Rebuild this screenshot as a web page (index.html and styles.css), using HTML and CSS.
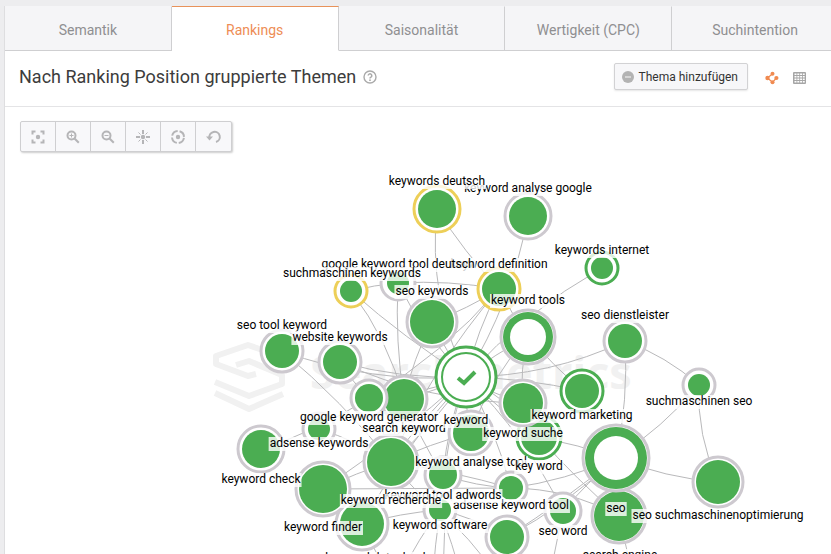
FILE: index.html
```
<!DOCTYPE html>
<html lang="de">
<head>
<meta charset="UTF-8">
<meta name="viewport" content="width=device-width, initial-scale=1.0">
<title>Nach Ranking Position gruppierte Themen</title>
<link rel="stylesheet" href="styles.css">
</head>
<body>

<div class="panel">
<nav class="tabs">
<a href="#semantik">Semantik</a>
<a href="#rankings" class="active">Rankings</a>
<a href="#saisonalitaet">Saisonalität</a>
<a href="#cpc">Wertigkeit (CPC)</a>
<a href="#suchintention">Suchintention</a>
</nav>

<header class="panel-header">
<h1>Nach Ranking Position gruppierte Themen</h1>
<button class="icon-btn help-btn" aria-label="Hilfe">
<svg width="14" height="14" viewBox="0 0 14 14"><circle cx="7" cy="7" r="6" fill="none" stroke="#aaa" stroke-width="1.4"/><path d="M5.2 5.6a1.8 1.8 0 1 1 2.7 1.6c-.6.3-.9.6-.9 1.2" fill="none" stroke="#aaa" stroke-width="1.5"/><circle cx="7" cy="10.2" r=".9" fill="#aaa"/></svg>
</button>
<button class="add-btn">
<svg width="12" height="12" viewBox="0 0 12 12"><circle cx="6" cy="6" r="6" fill="#b3b3b3"/><path d="M3 6h6" stroke="#eee" stroke-width="1.2"/></svg>
Thema hinzufügen
</button>
<button class="icon-btn graph-btn" aria-label="Netzwerk">
<svg width="14" height="14" viewBox="0 0 14 14"><path d="M7.500 2.700L2.500 7l5 4.300M7.500 11.300l3.900-4.300" fill="none" stroke="#f08a50" stroke-width="1.2"/><g fill="#f08a50"><circle cx="2.5" cy="7" r="2.2"/><circle cx="7.5" cy="2.7" r="2"/><circle cx="11.4" cy="7" r="2.1"/><circle cx="7.5" cy="11.3" r="2"/></g></svg>
</button>
<button class="icon-btn" aria-label="Tabelle">
<svg width="13" height="12" viewBox="0 0 13 12"><rect width="13" height="12" rx="1" fill="#a6a6a6"/><g fill="#fff"><path d="M1.500 1.500h2v1.500h-2zM4.300 1.500h2v1.500h-2zM7.100 1.500h2v1.500h-2zM9.900 1.500h1.800v1.500h-1.800z"/><path d="M1.500 4h2v1.500h-2zM4.300 4h2v1.500h-2zM7.100 4h2v1.500h-2zM9.900 4h1.800v1.500h-1.800z"/><path d="M1.500 6.500h2v1.500h-2zM4.300 6.500h2v1.500h-2zM7.100 6.500h2v1.500h-2zM9.900 6.500h1.800v1.500h-1.800z"/><path d="M1.500 9h2v1.500h-2zM4.300 9h2v1.500h-2zM7.100 9h2v1.500h-2zM9.900 9h1.800v1.500h-1.800z"/></g></svg>
</button>
</header>

<main class="graph">
<svg id="graph" class="graph-canvas"></svg>
<div class="toolbar">
<button aria-label="Einpassen"><svg width="14" height="14" viewBox="0 0 14 14"><path d="M1.500 4.500v-3h3M9.500 1.500h3v3M12.500 9.500v3h-3M4.500 12.500h-3v-3"/><circle cx="7" cy="7" r="2.200" class="dot"/></svg></button>
<button aria-label="Vergrößern"><svg width="14" height="14" viewBox="0 0 14 14"><circle cx="5.500" cy="5.500" r="4"/><path d="M8.500 8.500l4.300 4.300"/><path d="M3.500 5.500h4M5.500 3.500v4" class="thin"/></svg></button>
<button aria-label="Verkleinern"><svg width="14" height="14" viewBox="0 0 14 14"><circle cx="5.500" cy="5.500" r="4"/><path d="M8.500 8.500l4.300 4.300"/><path d="M3.500 5.500h4" class="thin"/></svg></button>
<button aria-label="Zentrieren"><svg width="16" height="16" viewBox="0 0 16 16"><path d="M8 1v4M8 11v4M1 8h4M11 8h4"/><path d="M3.500 3.500l2 2M12.500 3.500l-2 2M3.500 12.500l2-2M12.500 12.500l-2-2" class="thin"/><circle cx="8" cy="8" r="2.200" class="dot"/></svg></button>
<button aria-label="Fokus"><svg width="14" height="14" viewBox="0 0 14 14"><circle cx="7" cy="7" r="6" stroke-dasharray="7.400 2" stroke-dashoffset="-1"/><circle cx="7" cy="7" r="2.200" class="dot"/></svg></button>
<button aria-label="Zurücksetzen"><svg width="16" height="14" viewBox="0 0 16 14"><path d="M3.500 8a5.200 5.200 0 1 1 6.500 4"/><path d="M0 6.500h7l-3.500 4z" class="dot"/></svg></button>
</div>
</main>
</div>

<script src="graph.js"></script>
</body>
</html>
```

FILE: styles.css
```
* {
box-sizing: border-box;
}

body {
font-family: Roboto, Arial, sans-serif;
margin: 0;
padding: 6px 0 0 4px;
background-color: #ededef;
overflow: hidden;
}

.panel {
display: flex;
flex-direction: column;
height: calc(100vh - 6px);
margin-right: -8px;
border-left: 1px solid #dedee0;
background-color: white;
}

.tabs {
display: flex;
}

.tabs a {
flex: 1 1 0;
height: 45px;
border-right: 1px solid #cfcfd1;
border-bottom: 1px solid #cfcfd1;
border-top: 1px solid #f5f5f7;
background-color: #f5f5f7;
color: #8f8f91;
font-size: 14px;
line-height: 46px;
text-align: center;
text-decoration: none;
}

.tabs a.active {
border-top-color: #e8925a;
border-bottom-color: white;
background-color: white;
color: #ee8d55;
}

.panel-header {
display: flex;
align-items: center;
height: 56px;
padding: 0 33px 4px 14px;
border-bottom: 1px solid #e4e4e6;
}

h1 {
margin: 0;
color: #3c3c3c;
font-size: 18px;
font-weight: 400;
line-height: 24px;
}

button {
font-family: inherit;
cursor: pointer;
}

.icon-btn {
display: flex;
margin: 2px 0 0 14px;
padding: 0;
border: none;
background: none;
}

.help-btn {
margin: 0 auto 0 7px;
}

.add-btn {
display: flex;
align-items: center;
gap: 5px;
height: 27px;
padding: 0 9px 0 7px;
border: 1px solid #d2d2d4;
border-radius: 2px;
background-color: #f7f7f9;
box-shadow: 0 1px 2px rgba(0, 0, 0, 0.1);
color: #333;
font-size: 12px;
}

.graph-btn {
margin-left: 17px;
}

.graph {
position: relative;
flex: 1;
min-height: 0;
padding: 14px 15px;
}

.graph-canvas {
position: absolute;
top: 0;
left: 0;
width: 100%;
height: 100%;
}

.toolbar {
position: relative;
display: inline-flex;
border: 1px solid #cfcfd1;
border-radius: 2px;
background-color: #f8f8fa;
box-shadow: 1px 1px 2px rgba(0, 0, 0, 0.2);
}

.toolbar button {
display: flex;
align-items: center;
justify-content: center;
width: 35px;
height: 29px;
padding: 0;
border: none;
border-right: 1px solid #cfcfd1;
background: none;
}

.toolbar button:last-child {
border-right: none;
}

.toolbar svg {
fill: none;
stroke: #b5b5b7;
stroke-width: 2;
}

.toolbar .thin {
stroke-width: 1;
}

.toolbar .dot {
fill: #b5b5b7;
stroke: none;
}

.watermark {
fill: #f1f1f1;
font-family: "Open Sans", sans-serif;
font-size: 45px;
font-weight: 700;
}

.watermark-logo {
fill: none;
stroke: #f1f1f1;
stroke-width: 6;
stroke-linejoin: round;
}

.link {
fill: none;
stroke: #b9b9bb;
stroke-width: 1;
}

.ring {
fill: white;
stroke-width: 3;
}

.gray {
stroke: #cdc9cf;
}

.yellow {
stroke: #edcf58;
}

.green {
stroke: #4bad52;
}

.dot-fill {
fill: #4bad52;
}

.hole {
fill: white;
}

.check {
fill: none;
stroke: #4bad52;
stroke-width: 4;
}

.label-bg {
fill: white;
fill-opacity: 0.8;
}

.label {
fill: #000;
font-size: 12px;
text-anchor: middle;
}
```

FILE: graph.js
```
const svg = document.getElementById('graph');
const pan = { x: -5, y: -107 };

// id, x, y, ring radius, dot radius, ring color, hole radius
const nodes = [
['analyseGoogle', 528, 216, 23, 19, 'gray'],
['deutsch', 437, 209, 23, 19, 'yellow'],
['toolDeutsch', 398, 283, 17, 11, 'gray'],
['definition', 499, 289, 21, 17, 'yellow'],
['suchKeywords', 351, 291, 16, 11, 'yellow'],
['internet', 602, 268, 16, 11, 'green'],
['seoKeywords', 432, 322, 25, 22, 'gray'],
['tools', 528, 337, 27, 25, 'gray', 18],
['dienstleister', 625, 341, 21, 17, 'gray'],
['suchSeo', 699, 385, 16, 11, 'gray'],
['seoTool', 282, 351, 21, 17, 'gray'],
['website', 340, 362, 21, 17, 'gray'],
['search', 404, 399, 23, 20, 'gray'],
['adsense', 319, 429, 16, 11, 'gray'],
['generator', 369, 398, 18, 14, 'gray'],
['marketing', 582, 391, 21, 17, 'green'],
['keyWord', 539, 437, 22, 18, 'green'],
['suche', 523, 403, 23, 20, 'gray'],
['analyseTool', 471, 433, 22, 18, 'gray'],
['adwords', 443, 475, 18, 14, 'gray'],
['adsenseTool', 511, 488, 16, 12, 'gray'],
['seoWord', 563, 511, 18, 13, 'gray'],
['software', 440, 510, 16, 11, 'gray'],
['programm', 507, 537, 21, 17, 'gray'],
['datenbank', 362, 524, 26, 22, 'gray'],
['recherche', 391, 462, 27, 24, 'gray'],
['finder', 323, 489, 27, 24, 'gray'],
['check', 261, 449, 23, 19, 'gray'],
['searchEngine', 619, 516, 27, 25, 'gray'],
['seo', 616, 458, 33, 31, 'gray', 22],
['optimierung', 718, 482, 25, 22, 'gray'],
['b1', 377, 640, 20, 16, 'gray'],
['b2', 430, 650, 20, 16, 'gray'],
['b3', 480, 650, 20, 16, 'gray'],
['b4', 540, 640, 20, 16, 'gray'],
['b5', 640, 620, 20, 16, 'gray'],
['main', 466, 377, 30, 0, 'green']
];

// from, to, bend
const links = [
['deutsch', 'main', 24], ['deutsch', 'definition', 5], ['analyseGoogle', 'main', -16],
['toolDeutsch', 'definition', -6], ['toolDeutsch', 'search', 6],
['toolDeutsch', 'main', 10], ['suchKeywords', 'search', -12], ['suchKeywords', 'main', 6],
['suchKeywords', 'toolDeutsch', -2], ['definition', 'main', 6], ['definition', 'seoKeywords', -4],
['definition', 'generator', -14], ['definition', 'tools', 2], ['definition', 'recherche', 16],
['internet', 'main', 14], ['seoKeywords', 'main', 4], ['seoKeywords', 'search', 5],
['tools', 'main', 4], ['tools', 'marketing', 2], ['tools', 'suche', 6],
['tools', 'analyseTool', 12], ['dienstleister', 'main', -18], ['dienstleister', 'suchSeo', -8],
['dienstleister', 'seo', -8], ['suchSeo', 'seo', -8], ['suchSeo', 'optimierung', 12],
['seo', 'optimierung', 8], ['seoTool', 'main', 20], ['seoTool', 'recherche', -8],
['website', 'main', 10], ['website', 'generator', 3], ['website', 'suche', 20],
['generator', 'main', 8], ['generator', 'check', -8], ['generator', 'recherche', -5],
['search', 'main', 3], ['search', 'recherche', 5], ['search', 'adwords', 4],
['main', 'suche', 5], ['main', 'marketing', -6], ['main', 'keyWord', 4], ['main', 'keyWord', -10],
['main', 'analyseTool', 4], ['main', 'adwords', 7], ['main', 'adsenseTool', -8],
['main', 'recherche', 6], ['main', 'recherche', -8], ['main', 'finder', -6],
['main', 'datenbank', 10], ['main', 'software', 8], ['main', 'seoWord', -14],
['adsense', 'recherche', -5], ['analyseTool', 'recherche', 4], ['analyseTool', 'keyWord', 4],
['finder', 'recherche', -3], ['finder', 'adsenseTool', 0], ['adwords', 'adsenseTool', 5],
['recherche', 'software', 5], ['datenbank', 'software', -4], ['software', 'programm', -6],
['programm', 'seo', 4], ['programm', 'seo', 9], ['adsenseTool', 'searchEngine', -14],
['adsenseTool', 'seo', 8], ['adsenseTool', 'recherche', 4], ['seo', 'seoWord', 3],
['keyWord', 'seo', -3], ['keyWord', 'searchEngine', 4], ['software', 'b1', 14],
['software', 'b2', 5], ['software', 'b3', -5], ['adwords', 'b2', -14],
['datenbank', 'b2', 3], ['seoWord', 'b4', 3], ['searchEngine', 'b5', -3], ['software', 'b4', -12]
];

// text, x, baseline
const labels = [
['keyword analyse google', 528, 192],
['keywords deutsch', 437, 185],
['keyword definition', 499, 268],
['google keyword tool deutsch', 398, 268],
['suchmaschinen keywords', 352, 277],
['keywords internet', 602, 254],
['seo keywords', 432, 295],
['keyword tools', 528, 304],
['seo dienstleister', 625, 319],
['suchmaschinen seo', 699, 405],
['seo tool keyword', 282, 329],
['website keywords', 340, 341],
['search keyword', 404, 432],
['google keyword generator', 369, 421],
['adsense keywords', 319, 447],
['keyword', 466, 424],
['keyword marketing', 582, 419],
['keyword suche', 523, 437],
['keyword analyse tool', 471, 466],
['key word', 539, 470],
['adsense keyword tool', 511, 509],
['keyword tool adwords', 443, 499],
['keyword recherche', 391, 504],
['keyword software', 440, 529],
['keyword check', 261, 483],
['keyword finder', 323, 531],
['keyword datenbank', 377, 562],
['seo word', 563, 535],
['seo', 616, 512],
['seo suchmaschinenoptimierung', 718, 519],
['search engine', 620, 559]
];

function add(parent, tag, attrs) {
const el = document.createElementNS('http://www.w3.org/2000/svg', tag);
for (const key in attrs) {
el.setAttribute(key, attrs[key]);
}
parent.appendChild(el);
return el;
}

const root = add(svg, 'g', { transform: `translate(${pan.x} ${pan.y})` });

function drawWatermark() {
add(root, 'path', { class: 'watermark-logo', d: 'M283 357l-35-12-32 11v8l32 12 8-2M236 365l13-4 33 14v9l-33 12-34-14M215 393l34 16 34-15' });
const text = add(root, 'text', { class: 'watermark', x: 310, y: 389 });
text.textContent = 'Searchmetrics';
}

function drawLinks() {
const byId = {};
nodes.forEach(n => { byId[n[0]] = n; });
links.forEach(([from, to, bend]) => {
const [, x1, y1] = byId[from];
const [, x2, y2] = byId[to];
const len = Math.hypot(x2 - x1, y2 - y1);
const cx = (x1 + x2) / 2 - (y2 - y1) / len * bend;
const cy = (y1 + y2) / 2 + (x2 - x1) / len * bend;
add(root, 'path', { class: 'link', d: `M${x1} ${y1}Q${cx} ${cy} ${x2} ${y2}` });
});
}

function drawNodes() {
nodes.forEach(([id, cx, cy, ring, dot, color, hole]) => {
add(root, 'circle', { class: 'ring ' + color, cx, cy, r: ring });
if (dot) {
add(root, 'circle', { class: 'dot-fill', cx, cy, r: dot });
}
if (hole) {
add(root, 'circle', { class: 'hole', cx, cy, r: hole });
}
});
// selected topic
add(root, 'circle', { class: 'green', cx: 466, cy: 377, r: 24, fill: 'none', 'stroke-width': 2 });
add(root, 'path', { class: 'check', d: 'M458 378l6 5 11-11' });
}

function drawLabels() {
labels.forEach(([value, x, y]) => {
const bg = add(root, 'rect', { class: 'label-bg' });
const text = add(root, 'text', { class: 'label', x, y });
text.textContent = value;
const width = text.getComputedTextLength() + 2;
bg.setAttribute('x', x - width / 2);
bg.setAttribute('y', y - 10);
bg.setAttribute('width', width);
bg.setAttribute('height', 14);
});
}

drawWatermark();
drawLinks();
drawNodes();
drawLabels();
```
